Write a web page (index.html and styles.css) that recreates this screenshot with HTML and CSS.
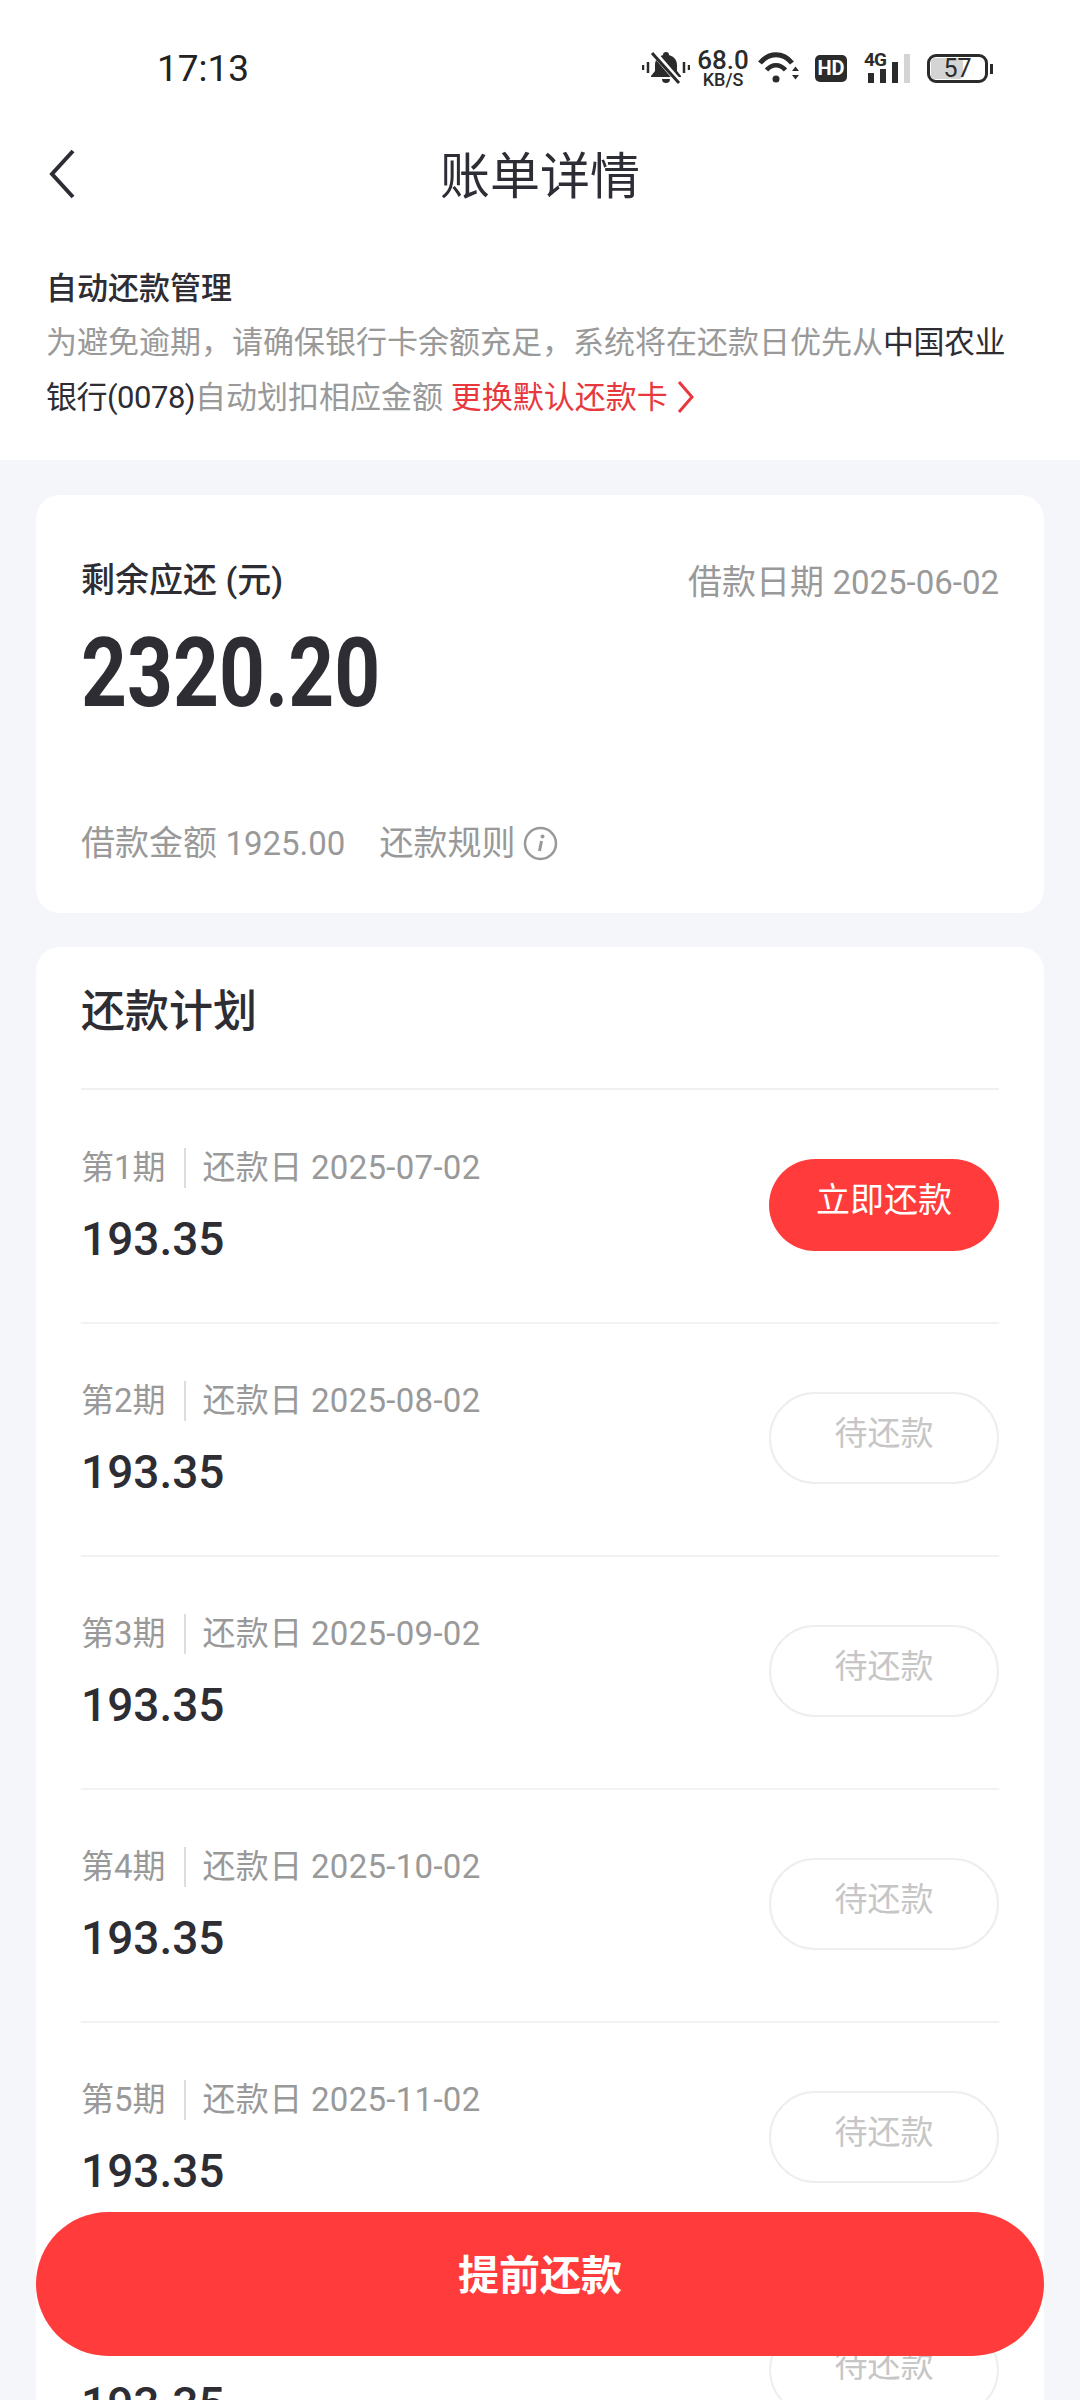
FILE: index.html
```html
<!DOCTYPE html>
<html lang="zh-CN">
  <head>
    <meta charset="UTF-8" />
    <meta name="viewport" content="width=device-width, initial-scale=1.0" />
    <title>账单详情</title>
    <link rel="stylesheet" href="styles.css">
  </head>
  <body>
    <div class="screen">
      <header class="top">
        <div class="status">
          <span class="time">17:13</span>
          <div class="status-icons">
            <svg class="bell" width="48" height="32" viewBox="0 0 48 32">
              <path d="M1 13v5M6 10v11M42 10v11M47 13v5" stroke="#2b2b2b" stroke-width="2.500" fill="none" />
              <path d="M21 3a3 3 0 0 1 6 0c5 1.500 8 5 8 10v6l4 5v1H9v-1l4-5v-6c0-5 3-8.500 8-10z" fill="#2b2b2b" />
              <path d="M20 27h8a4 4 0 0 1-8 0z" fill="#2b2b2b" />
              <path d="M12 1l25 29" stroke="#fff" stroke-width="6" fill="none" />
              <path d="M10 1l27 30" stroke="#2b2b2b" stroke-width="3" fill="none" />
            </svg>
            <div class="speed">
              <span class="speed-num">68.0</span>
              <span class="speed-unit">KB/S</span>
            </div>
            <svg class="wifi" width="41" height="32" viewBox="0 0 41 32">
              <path d="M2 11C11 0 25 0 34 11" stroke="#2b2b2b" stroke-width="5" fill="none" />
              <path d="M8.500 18C14 11.500 22 11.500 27.500 18" stroke="#2b2b2b" stroke-width="4.500" fill="none" />
              <circle cx="18" cy="27" r="3.500" fill="#2b2b2b" />
              <path d="M34 19h7l-3.500-4.500zM34 23h7l-3.500 4.500z" fill="#2b2b2b" />
            </svg>
            <span class="hd">HD</span>
            <div class="signal">
              <span class="sig-label">4G</span>
              <i class="bar bar1"></i>
              <i class="bar bar2"></i>
              <i class="bar bar3"></i>
              <i class="bar bar4"></i>
            </div>
            <div class="battery">
              <i class="battery-fill"></i>
              <span class="battery-num">57</span>
            </div>
          </div>
        </div>

        <nav class="nav">
          <svg class="back" width="26" height="50" viewBox="0 0 26 50">
            <path d="M24 2L3 25l21 23" stroke="#2d2d35" stroke-width="4" fill="none" />
          </svg>
          <h1>账单详情</h1>
        </nav>

        <section class="notice">
          <h2>自动还款管理</h2>
          <p>为避免逾期&#65292;请确保银行卡余额充足&#65292;系统将在还款日优先从<b>中国农业</b></p>
          <p>
            <b>银行(0078)</b>自动划扣相应金额
            <a class="change">更换默认还款卡<svg width="18" height="32" viewBox="0 0 18 32"><path d="M2 1l13 15L2 31" stroke="#e8383d" stroke-width="3" fill="none" /></svg></a>
          </p>
        </section>
      </header>

      <main>
        <section class="card summary">
          <div class="summary-top">
            <span class="summary-label">剩余应还 (元)</span>
            <span class="muted">借款日期 <span class="date">2025-06-02</span></span>
          </div>
          <div class="summary-amount">2320.20</div>
          <div class="summary-foot muted">
            <span>借款金额 <span class="date">1925.00</span></span>
            <span class="rule">还款规则
              <svg width="35" height="35" viewBox="0 0 35 35">
                <circle cx="17.500" cy="17.500" r="15.500" stroke="#999" stroke-width="2.500" fill="none" />
                <path d="M18.500 15l-2 10" stroke="#999" stroke-width="3" fill="none" />
                <circle cx="19.500" cy="10.500" r="2" fill="#999" />
              </svg>
            </span>
          </div>
        </section>

        <section class="card plan">
          <h3>还款计划</h3>

          <div class="row">
            <div>
              <div class="row-info"><span class="term">第1期</span><span class="due">还款日 2025-07-02</span></div>
              <div class="row-amount">193.35</div>
            </div>
            <span class="pay pay-now">立即还款</span>
          </div>

          <div class="row">
            <div>
              <div class="row-info"><span class="term">第2期</span><span class="due">还款日 2025-08-02</span></div>
              <div class="row-amount">193.35</div>
            </div>
            <span class="pay">待还款</span>
          </div>

          <div class="row">
            <div>
              <div class="row-info"><span class="term">第3期</span><span class="due">还款日 2025-09-02</span></div>
              <div class="row-amount">193.35</div>
            </div>
            <span class="pay">待还款</span>
          </div>

          <div class="row">
            <div>
              <div class="row-info"><span class="term">第4期</span><span class="due">还款日 2025-10-02</span></div>
              <div class="row-amount">193.35</div>
            </div>
            <span class="pay">待还款</span>
          </div>

          <div class="row">
            <div>
              <div class="row-info"><span class="term">第5期</span><span class="due">还款日 2025-11-02</span></div>
              <div class="row-amount">193.35</div>
            </div>
            <span class="pay">待还款</span>
          </div>

          <div class="row">
            <div>
              <div class="row-info"><span class="term">第6期</span><span class="due">还款日 2025-12-02</span></div>
              <div class="row-amount">193.35</div>
            </div>
            <span class="pay">待还款</span>
          </div>
        </section>
      </main>

      <button class="prepay" type="button"><span>提前还款</span></button>
    </div>
  </body>
</html>
```

FILE: styles.css
```css
* {
  margin: 0;
  padding: 0;
  box-sizing: border-box;
}

body {
  background-color: #f5f6fa;
  color: #2d2d33;
  font-family: Roboto, "Noto Sans CJK SC", sans-serif;
}

.screen {
  position: relative;
  width: 1080px;
  height: 2400px;
  overflow: hidden;
}

/* top white part */
.top {
  height: 460px;
  background-color: white;
}

.status {
  height: 136px;
  display: flex;
  align-items: center;
  justify-content: space-between;
  padding: 0 92px 0 157px;
}

.time {
  font-size: 37px;
  font-weight: 400;
  color: #222;
}

.status-icons {
  display: flex;
  align-items: center;
  color: #2b2b2b;
}

.speed {
  display: flex;
  flex-direction: column;
  align-items: center;
  margin-left: 9px;
  width: 48px;
}

.speed-num {
  font-size: 26px;
  font-weight: 500;
  line-height: 24px;
}

.speed-unit {
  font-size: 18px;
  font-weight: 500;
  line-height: 16px;
}

.wifi {
  margin-left: 11px;
}

.hd {
  width: 32px;
  height: 27px;
  margin-left: 16px;
  border-radius: 5px;
  background-color: #2b2b2b;
  color: white;
  font-size: 20px;
  font-weight: 700;
  line-height: 27px;
  text-align: center;
}

.signal {
  position: relative;
  width: 46px;
  height: 30px;
  margin-left: 17px;
  display: flex;
  align-items: flex-end;
  gap: 6px;
  padding-left: 4px;
}

.sig-label {
  position: absolute;
  left: 0;
  top: -3px;
  font-size: 19px;
  font-weight: 700;
  line-height: 20px;
  letter-spacing: -1px;
}

.bar {
  width: 6px;
  background-color: #2b2b2b;
}

.bar1 {
  height: 10px;
}

.bar2 {
  height: 14px;
}

.bar3 {
  height: 21px;
}

.bar4 {
  height: 29px;
  background-color: #d4d4d4;
}

.battery {
  position: relative;
  width: 61px;
  height: 29px;
  margin-left: 17px;
  border: 3px solid #2b2b2b;
  border-radius: 9px;
  text-align: center;
}

.battery::after {
  content: "";
  position: absolute;
  right: -8px;
  top: 7px;
  width: 3px;
  height: 10px;
  background-color: #2b2b2b;
}

.battery-fill {
  position: absolute;
  left: 1px;
  top: 1px;
  bottom: 1px;
  width: 32px;
  border-radius: 4px;
  background-color: #d4d4d4;
}

.battery-num {
  position: relative;
  font-size: 25px;
  line-height: 23px;
  display: block;
}

.nav {
  position: relative;
  height: 78px;
  display: flex;
  align-items: center;
  justify-content: center;
}

.back {
  position: absolute;
  left: 49px;
  top: 13px;
}

h1 {
  margin-bottom: 6px;
  font-size: 50px;
  font-weight: 400;
  color: #2d2d35;
}

.notice {
  padding: 51px 0 0 46px;
}

.notice h2 {
  font-size: 31px;
  font-weight: 500;
  line-height: 48px;
  margin-bottom: 2px;
}

.notice p {
  font-size: 31px;
  line-height: 55px;
  color: #999;
  white-space: nowrap;
}

.notice b {
  font-weight: 400;
  letter-spacing: -0.5px;
  color: #2d2d33;
}

.change {
  color: #e8383d;
}

.change svg {
  margin-left: 9px;
  vertical-align: -5px;
}

/* cards */
main {
  padding: 35px 36px 0;
  display: flex;
  flex-direction: column;
  gap: 34px;
}

.card {
  background-color: white;
  border-radius: 24px;
  padding: 0 45px;
}

.muted {
  font-size: 34px;
  color: #999;
}

.date {
  font-size: 33px;
}

.summary {
  height: 418px;
  display: flex;
  flex-direction: column;
  padding-top: 61px;
  padding-bottom: 46px;
}

.summary-top {
  height: 48px;
  display: flex;
  align-items: center;
  justify-content: space-between;
  line-height: 48px;
}

.summary-top .muted {
  position: relative;
  top: 2px;
}

.summary-label {
  font-size: 34px;
  font-weight: 500;
}

.summary-amount {
  margin-top: 14px;
  font-size: 96px;
  font-weight: 700;
  line-height: 110px;
  transform: scaleX(0.835);
  transform-origin: left center;
}

.summary-foot {
  margin-top: auto;
  height: 48px;
  display: flex;
  align-items: center;
  gap: 34px;
  line-height: 48px;
}

.rule {
  display: flex;
  align-items: center;
  gap: 8px;
}

.plan h3 {
  height: 143px;
  margin-bottom: 1px;
  padding-bottom: 20px;
  display: flex;
  align-items: center;
  font-size: 44px;
  font-weight: 500;
  border-bottom: 2px solid #f0f0f0;
}

.row {
  height: 233px;
  padding-bottom: 4px;
  display: flex;
  align-items: center;
  justify-content: space-between;
  border-bottom: 2px solid #f2f2f2;
}

.row-info {
  display: flex;
  align-items: center;
  font-size: 33px;
  line-height: 40px;
  color: #999;
  margin-bottom: 29px;
}

.term {
  padding-right: 18px;
  margin-right: 17px;
  border-right: 2px solid #ddd;
}

.due {
  letter-spacing: 0.3px;
}

.row-amount {
  font-size: 46px;
  font-weight: 500;
  line-height: 44px;
}

.pay {
  width: 230px;
  height: 92px;
  border: 2px solid #eee;
  border-radius: 46px;
  font-size: 33px;
  line-height: 80px;
  text-align: center;
  color: #c6c6c6;
}

.pay-now {
  border: none;
  background-color: #ff3b3b;
  font-size: 34px;
  color: white;
  line-height: 82px;
}

/* stays over the list */
.prepay {
  position: absolute;
  left: 36px;
  right: 36px;
  top: 2212px;
  height: 144px;
  border: none;
  border-radius: 72px;
  background-color: #ff3b3b;
  color: white;
  font-family: inherit;
  font-size: 41px;
  font-weight: 700;
}

.prepay span {
  display: block;
  margin-top: -24px;
}
```
